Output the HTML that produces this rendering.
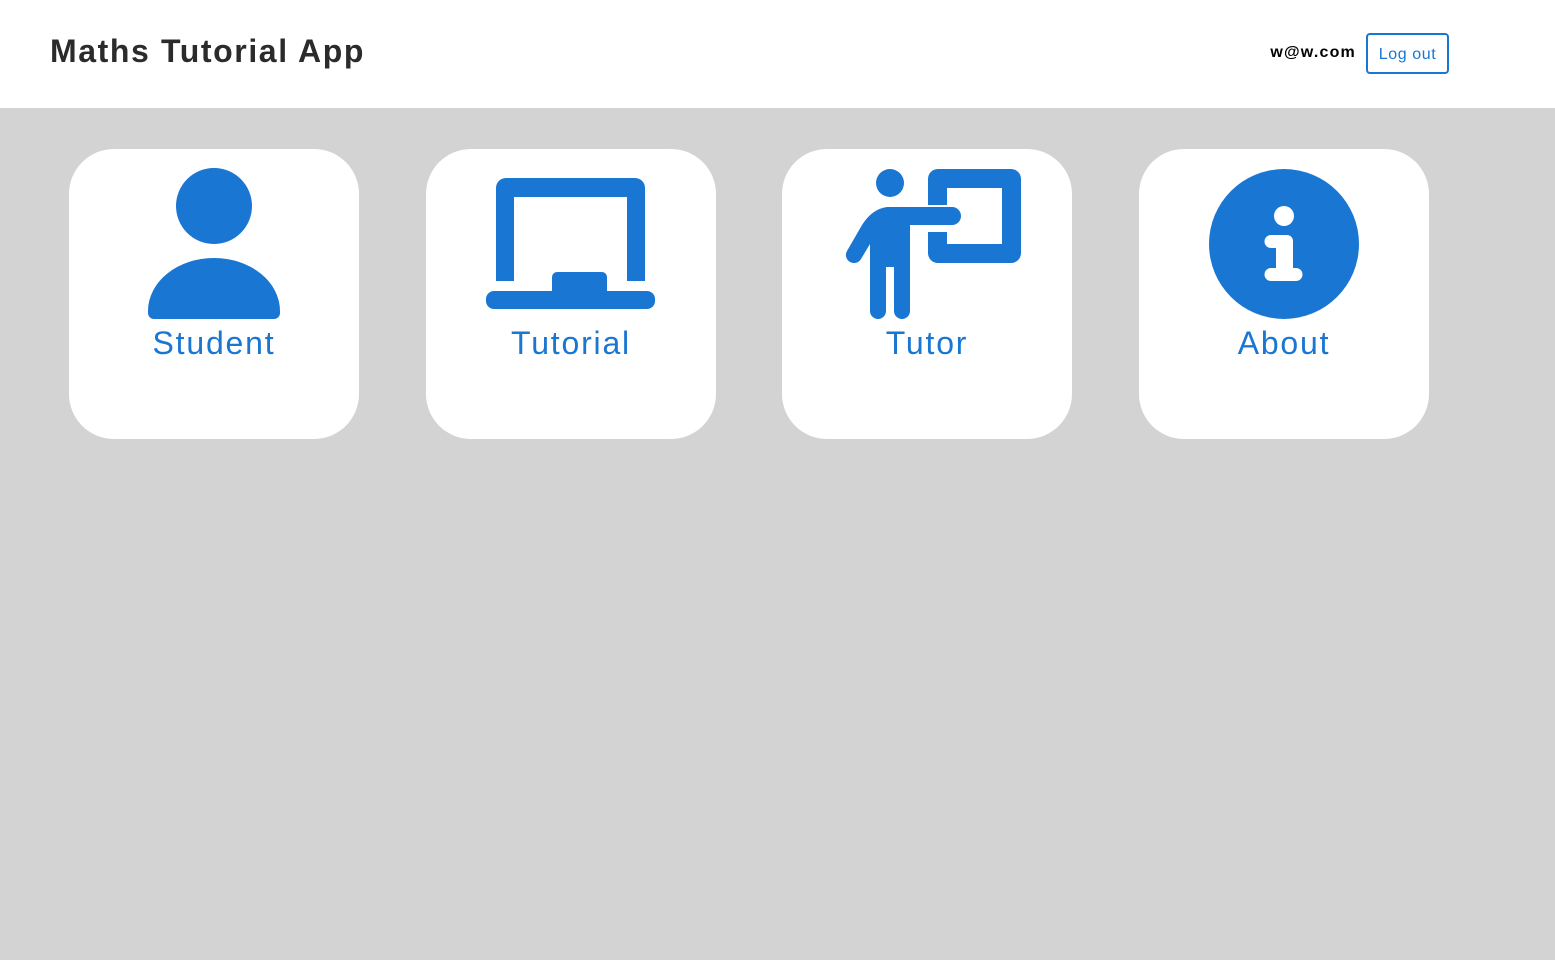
<!DOCTYPE html>
<html><head><style>
body{margin:0;width:1555px;height:960px;background:#d3d3d3;font-family:"Liberation Sans",sans-serif;overflow:hidden;position:relative}
.hdr{position:absolute;left:0;top:0;width:1555px;height:108px;background:#fff}
.title{position:absolute;left:50px;top:33px;font-size:32px;font-weight:bold;color:#2b2b2b;letter-spacing:1.6px}
.email{position:absolute;right:199px;top:44px;font-size:16px;font-weight:bold;color:#000;letter-spacing:1.2px}
.btn{position:absolute;left:1366px;top:33px;width:79px;height:37px;border:2px solid #1976d2;border-radius:4px;color:#1976d2;font-size:16px;text-align:center;line-height:39px;letter-spacing:0.6px}
.card{position:absolute;top:149px;width:290px;height:290px;background:#fff;border-radius:45px}
.card svg{position:absolute;left:0;top:0}
.lbl{position:absolute;left:0;width:290px;top:176px;text-align:center;font-size:32px;color:#1976d2;letter-spacing:1.8px}
</style></head><body>
<div class="hdr"><div class="title">Maths Tutorial App</div><div class="email">w@w.com</div><div class="btn">Log out</div></div>

<div class="card" style="left:69px"><svg width="290" height="200" fill="#1976d2">
<circle cx="145" cy="57" r="38"/><path d="M79 164 V162 A66 53 0 0 1 145 109 A66 53 0 0 1 211 162 V164 a6 6 0 0 1 -6 6 H85 a6 6 0 0 1 -6 -6 Z"/></svg>
<div class="lbl">Student</div></div>

<div class="card" style="left:426px"><svg width="290" height="200" fill="#1976d2">
<path d="M70 132 V39 a10 10 0 0 1 10 -10 H209 a10 10 0 0 1 10 10 V132 H201 V48 H88 V132 Z"/>
<rect x="60" y="142" width="169" height="18" rx="8"/><rect x="126" y="123" width="55" height="25" rx="5"/></svg>
<div class="lbl">Tutorial</div></div>

<div class="card" style="left:782px"><svg width="290" height="200" fill="#1976d2">
<circle cx="108" cy="34" r="14"/>
<path d="M146 56 V30 a10 10 0 0 1 10 -10 H229 a10 10 0 0 1 10 10 V104 a10 10 0 0 1 -10 10 H156 a10 10 0 0 1 -10 -10 V83 H165 V95 H220 V39 H165 V56 Z"/>
<path d="M105 58 H170 a9 9 0 0 1 0 18 H128 V162 a8 8 0 0 1 -16 0 V118 H104 V162 a8 8 0 0 1 -16 0 V95 L79 110 a8 8 0 0 1 -14 -8 L80 76 Q90 60 105 58 Z"/></svg>
<div class="lbl">Tutor</div></div>

<div class="card" style="left:1139px"><svg width="290" height="200">
<circle cx="145" cy="95" r="75" fill="#1976d2"/><circle cx="145" cy="67" r="10" fill="#fff"/>
<path d="M132 86 H148 a6 6 0 0 1 6 6 V119 H157 a6 6 0 0 1 0 13 H132 a6 6 0 0 1 0 -13 H137 V99 H132 a6.5 6.5 0 0 1 0 -13 Z" fill="#fff"/></svg>
<div class="lbl">About</div></div>
</body></html>
